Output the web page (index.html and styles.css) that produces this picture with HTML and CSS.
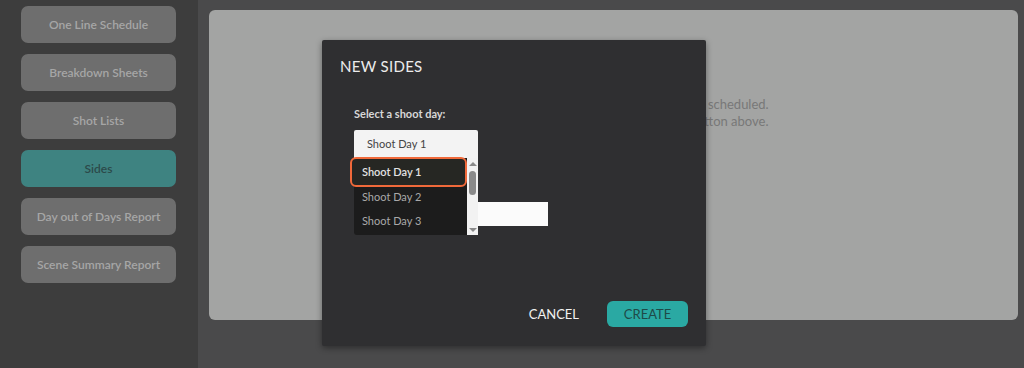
FILE: index.html
```html
<!DOCTYPE html>
<html lang="en">
<head>
  <meta charset="UTF-8" />
  <title>Sides</title>
  <link rel="stylesheet" href="styles.css">
</head>
<body>
  <div class="app">
    <!-- Report nav -->
    <aside class="sidebar">
      <a class="nav-btn">One Line Schedule</a>
      <a class="nav-btn">Breakdown Sheets</a>
      <a class="nav-btn">Shot Lists</a>
      <a class="nav-btn active">Sides</a>
      <a class="nav-btn">Day out of Days Report</a>
      <a class="nav-btn">Scene Summary Report</a>
    </aside>

    <main class="content">
      <div class="panel">
        <p class="empty">There are currently no sides that have been scheduled.<br>To create new sides, click the New Sides button above.</p>
      </div>
    </main>
  </div>

  <!-- New sides dialog -->
  <div class="modal">
    <h2 class="modal-title">NEW SIDES</h2>
    <div class="modal-body">
      <label class="field-label">Select a shoot day:</label>
      <div class="select-wrap">
        <div class="select">Shoot Day 1</div>
        <div class="dropdown">
          <ul class="options">
            <li class="option selected">Shoot Day 1</li>
            <li class="option">Shoot Day 2</li>
            <li class="option">Shoot Day 3</li>
          </ul>
          <div class="scrollbar">
            <span class="arrow up"></span>
            <span class="thumb"></span>
            <span class="arrow down"></span>
          </div>
        </div>
      </div>
      <div class="name-input"></div>
    </div>
    <div class="modal-footer">
      <button class="btn-cancel">CANCEL</button>
      <button class="btn-create">CREATE</button>
    </div>
  </div>
</body>
</html>
```

FILE: styles.css
```css
:root {
  --side: #3d3d3d;
  --main: #4a4a4b;
  --panel: #a3a4a3;
  --modal: #2f2f31;
  --teal: #2aa9a3;
  --orange: #f0693a;
}

* {
  box-sizing: border-box;
}

body {
  margin: 0;
  width: 1024px;
  height: 368px;
  overflow: hidden;
  background: var(--main);
  font-family: Lato, 'Open Sans', sans-serif;
}

.app {
  display: flex;
  height: 100%;
}

.sidebar {
  width: 198px;
  flex-shrink: 0;
  background: var(--side);
  padding: 6px 0 0 21px;
  display: flex;
  flex-direction: column;
  gap: 11px;
}

.nav-btn {
  display: flex;
  align-items: center;
  justify-content: center;
  width: 155px;
  height: 37px;
  border-radius: 7px;
  background: #6e6e6e;
  color: #a6a6a6;
  font-size: 12px;
  font-weight: 600;
}

.nav-btn.active {
  background: #3e8381;
  color: #2c4a4a;
}

.content {
  flex: 1;
  padding: 10px 6px 0 11px;
}

.panel {
  height: 310px;
  background: var(--panel);
  border-radius: 6px;
  padding-top: 86px;
}

.empty {
  margin: 0;
  text-align: center;
  font-size: 13px;
  line-height: 17px;
  color: #787878;
}

/* dialog */
.modal {
  position: absolute;
  left: 322px;
  top: 40px;
  width: 384px;
  height: 306px;
  background: var(--modal);
  border-radius: 2px;
  box-shadow: 0 2px 6px rgba(0, 0, 0, 0.4);
  display: flex;
  flex-direction: column;
}

.modal-title {
  margin: 0;
  padding: 17px 0 0 18px;
  font-size: 15px;
  font-weight: normal;
  letter-spacing: 0.3px;
  color: #ececec;
}

.modal-body {
  flex: 1;
  padding: 32px 0 0 32px;
}

.field-label {
  display: block;
  font-size: 11px;
  font-weight: bold;
  color: #d8d8d8;
  margin-bottom: 10px;
}

.select-wrap {
  position: relative;
}

.select {
  width: 124px;
  height: 28px;
  background: #f3f3f3;
  border-radius: 2px 2px 0 0;
  padding-left: 13px;
  line-height: 28px;
  font-size: 11px;
  color: #444;
}

.name-input {
  width: 194px;
  height: 24px;
  margin-top: 44px;
  background: #fbfbfb;
}

.dropdown {
  position: absolute;
  left: 0;
  top: 28px;
  width: 124px;
  height: 77px;
  background: #1c1c1c;
  border-radius: 0 0 3px 3px;
  display: flex;
}

.options {
  list-style: none;
  margin: 0;
  padding: 2px 0 0;
  flex: 1;
}

.option {
  height: 24px;
  line-height: 24px;
  padding-left: 8px;
  font-size: 11px;
  color: #a9a9a9;
}

.option.selected {
  margin: -3px 0 -2px -4px;
  height: 30px;
  line-height: 26px;
  padding-left: 10px;
  width: 117px;
  border: 2px solid var(--orange);
  border-radius: 6px;
  background: #262723;
  color: #e2e2e2;
  font-weight: 600;
}

.scrollbar {
  width: 12px;
  background: #f2f2f2;
  display: flex;
  flex-direction: column;
  align-items: center;
  padding: 4px 0 3px;
}

.thumb {
  width: 7px;
  height: 24px;
  margin: 5px 0 auto;
  border-radius: 4px;
  background: #8a8a8a;
}

.arrow {
  width: 0;
  height: 0;
  border-left: 4px solid transparent;
  border-right: 4px solid transparent;
}

.arrow.up {
  border-bottom: 4px solid #8a8a8a;
}

.arrow.down {
  border-top: 4px solid #8a8a8a;
}

.modal-footer {
  display: flex;
  justify-content: flex-end;
  align-items: center;
  gap: 28px;
  padding: 0 18px 19px 0;
}

.modal-footer button {
  font-family: Lato, 'Open Sans', sans-serif;
  font-size: 13px;
  border: none;
  cursor: pointer;
}

.btn-cancel {
  background: none;
  color: #f2f2f2;
  padding: 0;
}

.btn-create {
  width: 81px;
  height: 26px;
  border-radius: 6px;
  background: var(--teal);
  color: #1f4a48;
}
```
